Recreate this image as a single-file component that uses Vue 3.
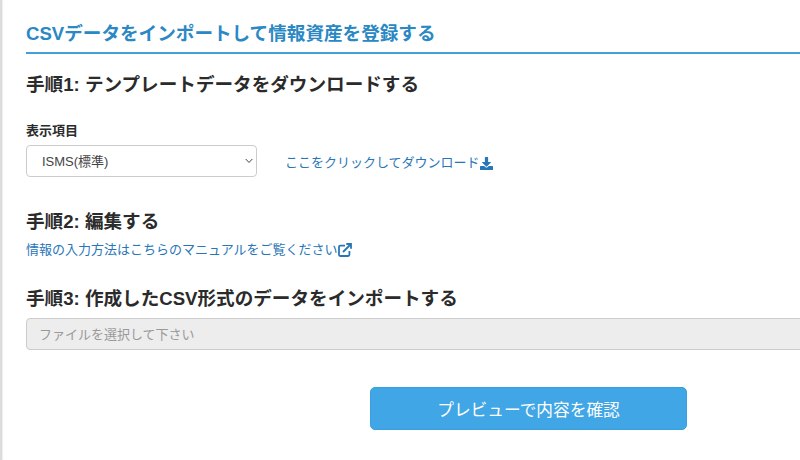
<script setup>
import { ref } from 'vue'

const template = ref('isms')
</script>
<template>
  <main class="page">
    <h1 class="title">CSVデータをインポートして情報資産を登録する</h1>

    <section class="step download">
      <h2>手順1: テンプレートデータをダウンロードする</h2>
      <label for="template">表示項目</label>
      <div class="row">
        <div class="select">
          <select id="template" v-model="template">
            <option value="isms">ISMS(標準)</option>
          </select>
          <svg class="chevron" viewBox="0 0 8 6"><path d="M.7 1 4 4.500 7.300 1" /></svg>
        </div>
        <a class="link" href="#">
          <span>ここをクリックしてダウンロード</span>
          <svg class="icon" viewBox="0 0 512 512">
            <path d="M216 0h80c13.300 0 24 10.700 24 24v168h87.700c17.800 0 26.700 21.500 14.100 34.100L269.700 378.300c-7.500 7.500-19.800 7.500-27.300 0L90.100 226.100c-12.600-12.600-3.700-34.100 14.100-34.100H192V24c0-13.300 10.700-24 24-24zm296 376v112c0 13.300-10.700 24-24 24H24c-13.300 0-24-10.700-24-24V376c0-13.300 10.700-24 24-24h146.700l49 49c20.100 20.100 52.500 20.100 72.600 0l49-49H488c13.300 0 24 10.700 24 24z" />
          </svg>
        </a>
      </div>
    </section>

    <section class="step edit">
      <h2>手順2: 編集する</h2>
      <a class="link" href="#">
        <span>情報の入力方法はこちらのマニュアルをご覧ください</span>
        <svg class="icon outline" viewBox="0 0 14 14">
          <path d="M7 2.600H2.200Q1 2.600 1 3.800V11.800Q1 13 2.200 13H10.200Q11.400 13 11.400 11.800V8" />
          <path d="M5 9 12 2M8.300 1H13V5.700" />
        </svg>
      </a>
    </section>

    <section class="step import">
      <h2>手順3: 作成したCSV形式のデータをインポートする</h2>
      <input type="text" placeholder="ファイルを選択して下さい" readonly />
    </section>

    <button class="preview">プレビューで内容を確認</button>
  </main>
</template>
<style>
body {
  overflow: hidden;
}
</style>
<style scoped>
.page {
  box-sizing: border-box;
  width: 800px;
  height: 460px;
  display: flex;
  flex-direction: column;
  border-left: 2px solid #dcdcdc;
  background: #fff;
  box-shadow: inset 1px 0 1px #eee;
  color: #2b2b2b;
  font-family: 'Liberation Sans', 'Noto Sans CJK JP', sans-serif;
  font-size: 13px;
}
.title {
  height: 54px;
  box-sizing: border-box;
  margin: 0 0 0 24px;
  padding-top: 19px;
  border-bottom: 2px solid #40a0dc;
  color: #2a88c4;
  font-size: 18.6px;
  line-height: 30px;
  white-space: nowrap;
}
.step {
  margin-left: 24px;
}
h2 {
  margin: 0;
  font-size: 18.6px;
  line-height: 28px;
  white-space: nowrap;
}
.download {
  padding-top: 17px;
}
label {
  display: block;
  margin-top: 22px;
  font-weight: bold;
  line-height: 20px;
}
.row {
  display: flex;
  align-items: center;
  margin-top: 4px;
  gap: 28px;
}
.row .link {
  padding-top: 4px;
}
.select {
  position: relative;
  width: 231px;
  height: 32px;
}
select {
  width: 100%;
  height: 100%;
  padding: 0 15px;
  appearance: none;
  border: 1px solid #ccc;
  border-radius: 4px;
  background: #fff;
  color: #444;
  font: inherit;
}
.chevron {
  position: absolute;
  right: 4px;
  top: 13px;
  width: 8px;
  height: 6px;
  fill: none;
  stroke: #444;
}
.link {
  display: flex;
  align-items: center;
  color: #2876b8;
  line-height: 20px;
  text-decoration: none;
  white-space: nowrap;
}
.icon {
  width: 13px;
  height: 13px;
  fill: currentColor;
}
.outline {
  width: 14px;
  height: 14px;
  fill: none;
  stroke: currentColor;
  stroke-width: 1.8;
}
.edit {
  padding-top: 31px;
}
.edit .link {
  margin-top: 4px;
}
.import {
  padding-top: 25px;
}
input {
  display: block;
  box-sizing: border-box;
  width: 800px;
  height: 32px;
  margin-top: 5px;
  padding: 0 12px;
  border: 1px solid #ccc;
  border-radius: 4px;
  background: #ededed;
  font: inherit;
}
input::placeholder {
  color: #999;
}
.preview {
  flex: none;
  width: 317px;
  height: 43px;
  margin: 37px 0 0 368px;
  border: 1px solid #3a9fde;
  border-radius: 5px;
  background: #40a6e5;
  color: #fff;
  font: 16.7px 'Liberation Sans', 'Noto Sans CJK JP', sans-serif;
}
</style>
